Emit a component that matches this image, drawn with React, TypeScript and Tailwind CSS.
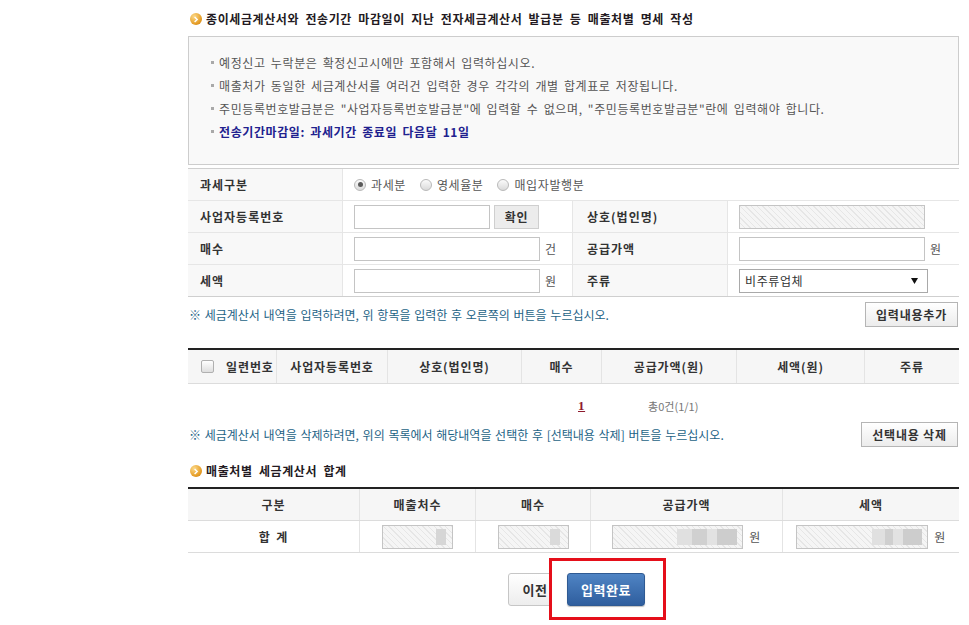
import React from 'react';

const Dot: React.FC = () => (
  <span className="flex w-[12px] h-[12px] shrink-0 items-center justify-center rounded-full bg-[radial-gradient(circle_at_35%_30%,#fcd988,#e59c25_65%,#c07610)]">
    <svg width="6" height="7" viewBox="0 0 6 7">
      <path d="M1.6 1 L4.2 3.5 L1.6 6" stroke="#fff" strokeWidth="1.4" fill="none" />
    </svg>
  </span>
);

const Radio: React.FC<{ checked?: boolean }> = ({ checked }) => (
  <span className="flex w-[12px] h-[12px] shrink-0 items-center justify-center rounded-full border border-[#b9b9b9] bg-linear-to-b from-[#fbfbfb] to-[#dadada]">
    {checked && <span className="w-[5px] h-[5px] rounded-full bg-[#5a5a5a]" />}
  </span>
);

const Hatch: React.FC<{ className?: string; children?: React.ReactNode }> = ({ className = '', children }) => (
  <div
    className={
      'h-[24px] border border-[#c4c4c4] bg-[repeating-linear-gradient(45deg,#f5f5f5_0px,#f5f5f5_3px,#e6e6e6_3px,#e6e6e6_4px)] flex items-center justify-end ' +
      className
    }
  >
    {children}
  </div>
);

const Label: React.FC<{ children: React.ReactNode; right?: boolean }> = ({ children, right }) => (
  <div
    className={
      'flex items-center bg-[#f8f8f8] font-bold text-[#333] tracking-[1px] border-r border-[#e6e6e6] ' +
      (right ? 'pl-[14px] border-l' : 'pl-[12px]')
    }
  >
    {children}
  </div>
);

const TextInput: React.FC<{ w: string }> = ({ w }) => (
  <input readOnly className={'h-[24px] border border-[#c4c4c4] bg-white outline-none ' + w} />
);

const GrayButton: React.FC<{ children: React.ReactNode; className?: string }> = ({ children, className = '' }) => (
  <button
    className={
      'h-[25px] border border-[#b5b5b5] bg-linear-to-b from-white to-[#ececec] font-bold text-[#333] text-[12px] tracking-[0.8px] ' +
      className
    }
  >
    {children}
  </button>
);

const infoLines = [
  '예정신고 누락분은 확정신고시에만 포함해서 입력하십시오.',
  '매출처가 동일한 세금계산서를 여러건 입력한 경우 각각의 개별 합계표로 저장됩니다.',
  '주민등록번호발급분은 "사업자등록번호발급분"에 입력할 수 없으며, "주민등록번호발급분"란에 입력해야 합니다.',
];

const listCols = [
  { w: 'w-[111px]', label: '사업자등록번호' },
  { w: 'w-[134px]', label: '상호(법인명)' },
  { w: 'w-[80px]', label: '매수' },
  { w: 'w-[135px]', label: '공급가액(원)' },
  { w: 'w-[128px]', label: '세액(원)' },
  { w: 'w-[94px]', label: '주류' },
];

export default function App() {
  return (
    <div className="relative w-[969px] h-[625px] overflow-hidden bg-white font-['Noto_Sans_CJK_KR',sans-serif] text-[12px] text-[#555] tracking-[0.6px] [word-spacing:2px]">
      <div className="ml-[188px] w-[771px] pt-[9px]">
        {/* 제목 */}
        <div className="flex h-[20px] items-center gap-[4px] pl-[2px]">
          <Dot />
          <h2 className="font-bold text-[12px] text-[#231a22] tracking-[0.6px] [word-spacing:3px]">
            종이세금계산서와 전송기간 마감일이 지난 전자세금계산서 발급분 등 매출처별 명세 작성
          </h2>
        </div>

        {/* 안내 박스 */}
        <div className="mt-[7px] h-[129px] border border-[#cdcdcd] bg-[#f9f9f9] pl-[22px] pt-[14px]">
          {infoLines.map((t) => (
            <div key={t} className="flex h-[23px] items-center">
              <span className="mr-[5px] h-[3px] w-[3px] bg-[#a9a9a9]" />
              <span>{t}</span>
            </div>
          ))}
          <div className="flex h-[23px] items-center">
            <span className="mr-[5px] h-[3px] w-[3px] bg-[#a9a9a9]" />
            <span className="font-bold text-[#21218f]">전송기간마감일: 과세기간 종료일 다음달 11일</span>
          </div>
        </div>

        {/* 입력 폼 */}
        <div className="mt-[3px] border-t border-b border-[#cfcfcf]">
          <div className="grid h-[32px] grid-cols-[155px_616px] border-b border-[#e6e6e6]">
            <Label>과세구분</Label>
            <div className="flex items-center pl-[11px] text-[#555]">
              <Radio checked />
              <span className="ml-[5px]">과세분</span>
              <span className="ml-[14px]"><Radio /></span>
              <span className="ml-[5px]">영세율분</span>
              <span className="ml-[14px]"><Radio /></span>
              <span className="ml-[5px]">매입자발행분</span>
            </div>
          </div>
          <div className="grid h-[32px] grid-cols-[155px_229px_156px_231px] border-b border-[#e6e6e6]">
            <Label>사업자등록번호</Label>
            <div className="flex items-center pl-[11px]">
              <TextInput w="w-[136px]" />
              <button className="ml-[4px] h-[24px] w-[45px] border border-[#cfcfcf] bg-[#ececec] font-bold text-[#333]">
                확인
              </button>
            </div>
            <Label right>상호(법인명)</Label>
            <div className="flex items-center pl-[11px]">
              <Hatch className="w-[186px]" />
            </div>
          </div>
          <div className="grid h-[32px] grid-cols-[155px_229px_156px_231px] border-b border-[#e6e6e6]">
            <Label>매수</Label>
            <div className="flex items-center pl-[11px]">
              <TextInput w="w-[186px]" />
              <span className="ml-[5px]">건</span>
            </div>
            <Label right>공급가액</Label>
            <div className="flex items-center pl-[11px]">
              <TextInput w="w-[186px]" />
              <span className="ml-[5px]">원</span>
            </div>
          </div>
          <div className="grid h-[31px] grid-cols-[155px_229px_156px_231px]">
            <Label>세액</Label>
            <div className="flex items-center pl-[11px]">
              <TextInput w="w-[186px]" />
              <span className="ml-[5px]">원</span>
            </div>
            <Label right>주류</Label>
            <div className="flex items-center pl-[11px]">
              <div className="flex h-[24px] w-[189px] items-center justify-between border border-[#a9a9a9] bg-white pl-[5px] pr-[9px] text-[#333]">
                <span>비주류업체</span>
                <svg width="7" height="6" viewBox="0 0 7 6">
                  <path d="M0 0 H7 L3.5 6 Z" fill="#111" />
                </svg>
              </div>
            </div>
          </div>
        </div>

        {/* 추가 안내 */}
        <div className="mt-[5px] flex items-center justify-between pr-[1px]">
          <span className="pl-[1px] text-[#1d6386] tracking-[0px] [word-spacing:1px]">
            ※ 세금계산서 내역을 입력하려면, 위 항목을 입력한 후 오른쪽의 버튼을 누르십시오.
          </span>
          <GrayButton className="w-[93px]">입력내용추가</GrayButton>
        </div>

        {/* 목록 */}
        <div className="mt-[21px] border-t-2 border-[#222]">
          <div className="flex h-[34px] border-b border-[#dcdcdc] bg-[#f6f6f6] font-bold text-[#333] tracking-[0.9px]">
            <div className="flex w-[89px] items-center border-r border-[#e4e4e4] pl-[13px]">
              <span className="h-[13px] w-[13px] rounded-[2px] border border-[#b0b0b0] bg-linear-to-b from-white to-[#dedede]" />
              <span className="ml-[12px]">일련번호</span>
            </div>
            {listCols.map((c, i) => (
              <div
                key={c.label}
                className={
                  'flex items-center justify-center ' +
                  c.w +
                  (i < listCols.length - 1 ? ' border-r border-[#e4e4e4]' : '')
                }
              >
                {c.label}
              </div>
            ))}
          </div>
        </div>

        {/* 페이지 */}
        <div className="flex h-[38px] items-center pl-[390px] pt-[6px]">
          <span className="font-['Liberation_Serif',serif] text-[13px] font-bold text-[#8e1b2e] underline">1</span>
          <span className="ml-[63px] text-[11px] text-[#777] tracking-[0px]">총0건(1/1)</span>
        </div>

        <div className="flex items-center justify-between pr-[1px]">
          <span className="pl-[1px] text-[#1d6386] tracking-[0px] [word-spacing:1px]">
            ※ 세금계산서 내역을 삭제하려면, 위의 목록에서 해당내역을 선택한 후 [선택내용 삭제] 버튼을 누르십시오.
          </span>
          <GrayButton className="w-[97px]">선택내용 삭제</GrayButton>
        </div>

        {/* 합계 */}
        <div className="mt-[14px] flex h-[20px] items-center gap-[4px] pl-[2px]">
          <Dot />
          <h2 className="font-bold text-[12px] text-[#231a22] tracking-[0.6px] [word-spacing:3px]">매출처별 세금계산서 합계</h2>
        </div>

        <div className="mt-[6px] border-t-2 border-[#222]">
          <div className="grid h-[32px] grid-cols-[172px_116px_115px_192px_176px] border-b border-[#dcdcdc] bg-[#f6f6f6] font-bold text-[#333] tracking-[0.9px]">
            <div className="flex items-center justify-center border-r border-[#e4e4e4]">구분</div>
            <div className="flex items-center justify-center border-r border-[#e4e4e4]">매출처수</div>
            <div className="flex items-center justify-center border-r border-[#e4e4e4]">매수</div>
            <div className="flex items-center justify-center border-r border-[#e4e4e4]">공급가액</div>
            <div className="flex items-center justify-center">세액</div>
          </div>
          <div className="grid h-[32px] grid-cols-[172px_116px_115px_192px_176px] border-b border-[#dcdcdc]">
            <div className="flex items-center justify-center border-r border-[#e4e4e4] font-bold text-[#333] tracking-[0.9px]">합 계</div>
            <div className="flex items-center justify-center border-r border-[#e4e4e4]">
              <Hatch className="w-[71px] pr-[6px]">
                <span className="h-[16px] w-[10px] bg-[#d6d6d6]" />
              </Hatch>
            </div>
            <div className="flex items-center justify-center border-r border-[#e4e4e4]">
              <Hatch className="w-[71px] pr-[8px]">
                <span className="h-[16px] w-[10px] bg-[#dadada]" />
              </Hatch>
            </div>
            <div className="flex items-center justify-center gap-[6px] border-r border-[#e4e4e4]">
              <Hatch className="w-[131px] pr-[5px]">
                <span className="h-[16px] w-[15px] bg-[#e0e0e0]" />
                <span className="h-[16px] w-[15px] bg-[#d0d0d0]" />
                <span className="h-[16px] w-[10px] bg-[#e2e2e2]" />
                <span className="h-[16px] w-[20px] bg-[#cdcdcd]" />
              </Hatch>
              <span>원</span>
            </div>
            <div className="flex items-center justify-center gap-[6px]">
              <Hatch className="w-[132px] pr-[5px]">
                <span className="h-[16px] w-[13px] bg-[#e0e0e0]" />
                <span className="h-[16px] w-[8px] bg-[#cfcfcf]" />
                <span className="h-[16px] w-[10px] bg-[#e2e2e2]" />
                <span className="h-[16px] w-[19px] bg-[#cdcdcd]" />
              </Hatch>
              <span>원</span>
            </div>
          </div>
        </div>

        {/* 하단 버튼 */}
        <div className="relative mt-[20px] flex items-center gap-[5px] pl-[320px]">
          <button className="h-[33px] w-[54px] rounded-[3px] border border-[#c6c6c6] bg-linear-to-b from-white to-[#ededed] text-[13px] font-bold text-[#333]">
            이전
          </button>
          <div className="absolute left-[361px] top-[-15px] h-[62px] w-[117px] border-[3px] border-[#e50f1a] bg-white" />
          <button className="relative z-10 h-[33px] w-[78px] rounded-[3px] border border-[#2f5a93] bg-linear-to-b from-[#4f84c4] to-[#2f5e9e] text-[13px] font-bold text-white shadow-[0_1px_1px_rgba(0,0,0,0.25)]">
            입력완료
          </button>
        </div>
      </div>
    </div>
  );
}
